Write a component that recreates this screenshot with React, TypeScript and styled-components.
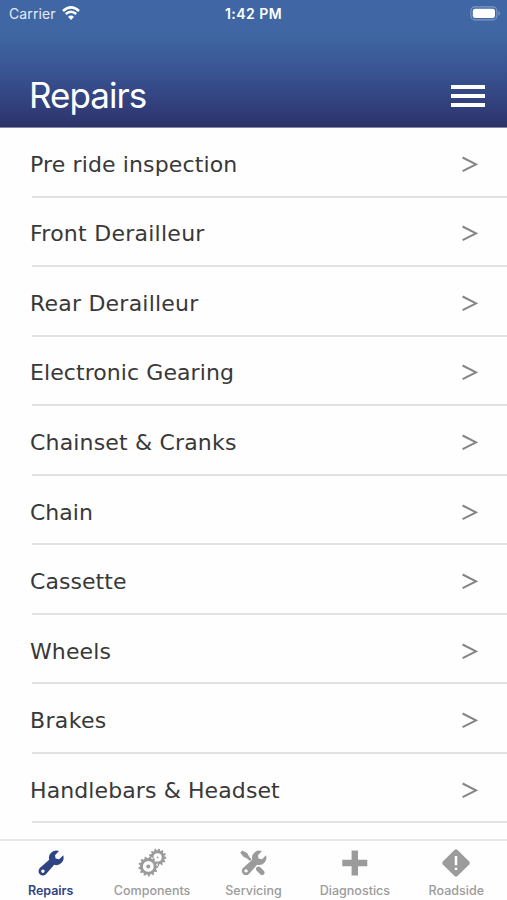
import React from "react";
import styled, { createGlobalStyle } from "styled-components";

const GlobalStyle = createGlobalStyle`
  * { box-sizing: border-box; }
  body { margin: 0; background: #fff; font-family: Inter, "Liberation Sans", sans-serif; }
`;

const Screen = styled.main`
  display: flex;
  flex-direction: column;
  width: 507px;
  height: 900px;
  overflow: hidden;
  background: #fefefe;
`;

const Header = styled.header`
  display: flex;
  flex-direction: column;
  flex: none;
  height: 128px;
  color: #fff;
  border-bottom: 1px solid #8387a9;
  background: linear-gradient(#4067a5 0%, #4067a2 26%, #3a5896 50%, #344684 75%, #2d3269 100%);
`;

const StatusBar = styled.div`
  display: grid;
  grid-template-columns: 1fr auto 1fr;
  align-items: center;
  height: 28px;
  padding: 0 6px 0 9px;
  font-size: 14px;
  line-height: 28px;
`;

const Carrier = styled.div`
  display: flex;
  align-items: center;
  gap: 6px;
  letter-spacing: 0.1px;
  color: #e4ebf7;
`;

const WifiIcon = styled.svg`
  margin-top: -2px;
`;

const Clock = styled.span`
  margin-right: 3px;
  font-size: 14px;
  font-weight: 600;
  letter-spacing: 0.45px;
`;

const BatteryIcon = styled.svg`
  justify-self: end;
  margin-top: -2px;
`;

const TitleBar = styled.div`
  display: flex;
  align-items: center;
  justify-content: space-between;
  height: 50px;
  margin-top: 43px;
  padding: 0 22px 0 29px;
`;

const Title = styled.h1`
  margin: -3px 0 0;
  font-size: 35px;
  font-weight: 400;
  line-height: 50px;
  letter-spacing: -0.95px;
`;

const MenuButton = styled.button`
  display: flex;
  flex-direction: column;
  gap: 5px;
  width: 34px;
  padding: 0;
  border: 0;
  background: none;
`;

const MenuLine = styled.span`
  height: 4.2px;
  background: #fff;
`;

const List = styled.ul`
  flex: 1;
  min-height: 0;
  margin: 0;
  padding: 0 0 0 32px;
  overflow: hidden;
  list-style: none;
`;

const Row = styled.li`
  display: flex;
  align-items: center;
  justify-content: space-between;
  height: 69.55px;
  padding: 5px 29px 0 0;
  border-bottom: 2px solid #e2e2e2;
`;

const RowLabel = styled.span<{ $spacing: number }>`
  margin: 1px 0 0 -2px;
  color: #383838;
  font-family: "DejaVu Sans", sans-serif;
  font-size: 22px;
  line-height: 30px;
  letter-spacing: ${(p) => p.$spacing}px;
  white-space: nowrap;
`;

const Chevron = styled.svg`
  flex: none;
`;

const TabBar = styled.nav`
  display: grid;
  grid-template-columns: repeat(5, 1fr);
  flex: none;
  height: 61px;
  border-top: 2px solid #e8e8e8;
  background: #fefefe;
`;

const Tab = styled.a<{ $active?: boolean }>`
  display: flex;
  flex-direction: column;
  align-items: center;
  padding-top: 7px;
  color: ${(p) => (p.$active ? "#2f4485" : "#9b9b9b")};
  font-weight: ${(p) => (p.$active ? 600 : 500)};
`;

const TabIcon = styled.svg`
  display: block;
  width: 30px;
  height: 30px;
  overflow: visible;
`;

const TabLabel = styled.span<{ $spacing: number }>`
  margin-top: 5px;
  font-size: 12.5px;
  line-height: 16px;
  letter-spacing: ${(p) => p.$spacing}px;
`;

const ROWS: [string, number][] = [
  ["Pre ride inspection", 0.13],
  ["Front Derailleur", 0.26],
  ["Rear Derailleur", 0.22],
  ["Electronic Gearing", 0.08],
  ["Chainset & Cranks", 0.17],
  ["Chain", 0],
  ["Cassette", 0.05],
  ["Wheels", 0.1],
  ["Brakes", 0.35],
  ["Handlebars & Headset", 0.1],
];

const WRENCH =
  "M23 3 19 7.2 19.6 10.6 23.2 11.2 27.2 7.2A7.4 7.4 0 0 1 18.2 16.8L9.9 26.2A4.3 4.3 0 1 1 3.8 20.1L13.2 11.8A7.4 7.4 0 0 1 23 3ZM6.9 21.5a1.7 1.7 0 1 0 .01 0Z";

function Gear({ cx, cy, r, teeth, hub }: { cx: number; cy: number; r: number; teeth: number; hub: number }) {
  const marks = Array.from({ length: teeth }, (_, i) => (
    <path
      key={i}
      d={`M-1.4 ${-r + 1}L-.8 ${-r - 1.7}H.8L1.4 ${-r + 1}Z`}
      transform={`rotate(${(i * 360) / teeth + 10})`}
    />
  ));
  return (
    <g transform={`translate(${cx} ${cy})`} fill="currentColor">
      <circle r={r - 1.4} fill="none" stroke="currentColor" strokeWidth="3" />
      {marks}
      <circle r={hub} />
    </g>
  );
}

const RepairsIcon = () => (
  <TabIcon viewBox="0 0 30 30">
    <path d={WRENCH} fill="currentColor" fillRule="evenodd" />
  </TabIcon>
);

const ComponentsIcon = () => (
  <TabIcon viewBox="0 0 30 30">
    <Gear cx={20.6} cy={9.4} r={7} teeth={13} hub={0.9} />
    <circle cx="11.3" cy="18.4" r="9.6" fill="#fefefe" />
    <Gear cx={11.3} cy={18.4} r={8.3} teeth={13} hub={2} />
  </TabIcon>
);

const ServicingIcon = () => (
  <TabIcon viewBox="0 0 30 30" fill="currentColor">
    <path d="M2.2 4.5 4.4 2.4 9.3 5.2 11.4 8.9 14 11.6 12.2 13.3 9.4 10.7 5.4 8.8Z" />
    <path
      d={WRENCH}
      transform="translate(1.3 .2) scale(.98)"
      fillRule="evenodd"
      stroke="#fefefe"
      strokeWidth="1.2"
      paintOrder="stroke"
    />
    <path d="M17.8 20.8c.4-2 2.6-3.2 4.2-1.8l4 4c2 2.1-1.2 5.5-3.4 3.4l-4.2-4Z" />
  </TabIcon>
);

const DiagnosticsIcon = () => (
  <TabIcon viewBox="0 0 30 30" fill="currentColor">
    <path d="M11.6 2.5h6.4v9.2h9.3v6.6H18v9.2h-6.4v-9.2H2.3v-6.6h9.3Z" />
  </TabIcon>
);

const RoadsideIcon = () => (
  <TabIcon viewBox="0 0 30 30">
    <path d="M13.5 1.9q1.5-1.3 3 0L28.2 13.5q1.3 1.5 0 3L16.5 28.1q-1.5 1.3-3 0L1.8 16.5q-1.3-1.5 0-3Z" fill="currentColor" />
    <path d="M15 8v9.2M15 19.7v2.4" stroke="#fefefe" strokeWidth="2.5" />
  </TabIcon>
);

const TABS = [
  { label: "Repairs", spacing: -0.05, Icon: RepairsIcon },
  { label: "Components", spacing: 0.02, Icon: ComponentsIcon },
  { label: "Servicing", spacing: 0.02, Icon: ServicingIcon },
  { label: "Diagnostics", spacing: 0.02, Icon: DiagnosticsIcon },
  { label: "Roadside", spacing: 0.02, Icon: RoadsideIcon },
];

export default function App() {
  return (
    <Screen>
      <GlobalStyle />
      <Header>
        <StatusBar>
          <Carrier>
            Carrier
            <WifiIcon width="18" height="14" viewBox="0 0 18 14" fill="none" stroke="#fff" strokeWidth="2.5">
              <path d="M1 5Q9-2.2 17 5M3.8 8Q9 3.5 14.2 8" />
              <path d="M9 14 6 10.8Q9 8.3 12 10.8Z" fill="#fff" stroke="none" />
            </WifiIcon>
          </Carrier>
          <Clock>1:42 PM</Clock>
          <BatteryIcon width="31" height="15" viewBox="0 0 31 15">
            <rect x=".9" y=".9" width="26" height="13" rx="4" fill="none" stroke="#7f9ac6" strokeWidth="1.1" />
            <rect x="2.8" y="2.8" width="22.2" height="9.2" rx="2.2" fill="#fff" />
            <path d="M28.5 5q3 2.5 0 5Z" fill="#7f9ac6" />
          </BatteryIcon>
        </StatusBar>
        <TitleBar>
          <Title>Repairs</Title>
          <MenuButton aria-label="Menu">
            <MenuLine />
            <MenuLine />
            <MenuLine />
          </MenuButton>
        </TitleBar>
      </Header>
      <List>
        {ROWS.map(([label, spacing]) => (
          <Row key={label}>
            <RowLabel $spacing={spacing}>{label}</RowLabel>
            <Chevron width="17" height="17" viewBox="0 0 17 17" fill="none" stroke="#858585" strokeWidth="2">
              <path d="M1.6 1.5 15 8.3 1.6 15.1" />
            </Chevron>
          </Row>
        ))}
      </List>
      <TabBar>
        {TABS.map(({ label, spacing, Icon }, i) => (
          <Tab key={label} $active={i === 0}>
            <Icon />
            <TabLabel $spacing={spacing}>{label}</TabLabel>
          </Tab>
        ))}
      </TabBar>
    </Screen>
  );
}
